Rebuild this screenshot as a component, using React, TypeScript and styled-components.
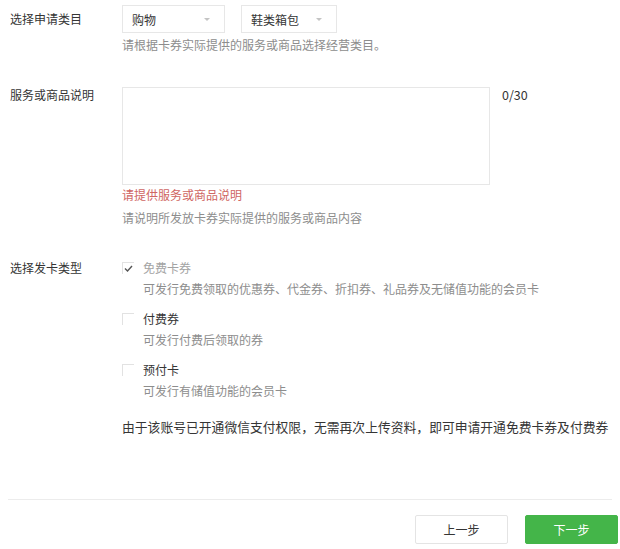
import React from "react";
import styled, { createGlobalStyle } from "styled-components";

const GlobalStyle = createGlobalStyle`
  body {
    margin: 0;
    background: #ffffff;
    font-family: "Noto Sans CJK SC", "Noto Sans", sans-serif;
    font-size: 12px;
    color: #353535;
  }
`;

const Page = styled.div`
  width: 620px;
  height: 549px;
  padding: 5px 0 0 10px;
  box-sizing: border-box;
  display: flex;
  flex-direction: column;
`;

const Row = styled.div<{ $mt?: number }>`
  display: flex;
  margin-top: ${(p) => p.$mt ?? 0}px;
`;

const Label = styled.div<{ $lh: number }>`
  width: 112px;
  flex-shrink: 0;
  line-height: ${(p) => p.$lh}px;
  color: #353535;
`;

const Field = styled.div`
  display: flex;
  flex-direction: column;
`;

const Selects = styled.div`
  display: flex;
  gap: 16px;
`;

const Select = styled.div<{ $w: number }>`
  width: ${(p) => p.$w}px;
  height: 28px;
  box-sizing: border-box;
  border: 1px solid #e7e7e7;
  padding: 0 14px 0 9px;
  display: flex;
  align-items: center;
  justify-content: space-between;
  color: #353535;
`;

const Caret = styled.span`
  width: 0;
  height: 0;
  border-left: 3px solid transparent;
  border-right: 3px solid transparent;
  border-top: 3px solid #c4c4c4;
`;

const Hint = styled.div<{ $mt?: number }>`
  color: #8d8d8d;
  line-height: 18px;
  margin-top: ${(p) => p.$mt ?? 0}px;
`;

const Error = styled.div`
  color: #cf6663;
  line-height: 18px;
  margin-top: 1px;
`;

const TextRow = styled.div`
  display: flex;
  align-items: flex-start;
`;

const TextArea = styled.div`
  width: 368px;
  height: 98px;
  box-sizing: border-box;
  border: 1px solid #e7e7e7;
`;

const Counter = styled.div`
  margin-left: 12px;
  line-height: 16px;
  color: #353535;
  font-size: 12.5px;
`;

const Options = styled.div`
  display: flex;
  flex-direction: column;
`;

const Option = styled.div<{ $mt?: number }>`
  display: flex;
  flex-direction: column;
  margin-top: ${(p) => p.$mt ?? 0}px;
`;

const OptionHead = styled.div`
  display: flex;
  align-items: center;
  height: 18px;
`;

const Box = styled.span`
  width: 12px;
  height: 12px;
  box-sizing: border-box;
  border-top: 1px solid #e2e2e2;
  border-left: 1px solid #e2e2e2;
  margin-right: 9px;
  display: flex;
  align-items: center;
  justify-content: center;
`;

const OptionTitle = styled.span<{ $disabled?: boolean }>`
  color: ${(p) => (p.$disabled ? "#a3a3a3" : "#353535")};
  line-height: 18px;
`;

const OptionDesc = styled.div`
  padding-left: 21px;
  color: #8d8d8d;
  line-height: 18px;
  margin-top: 3px;
`;

const Note = styled.div`
  margin-top: 18px;
  font-size: 12.8px;
  line-height: 18px;
  color: #353535;
`;

const Divider = styled.div`
  margin: 63px 8px 0 -2px;
  border-top: 1px solid #ececec;
`;

const Footer = styled.div`
  display: flex;
  justify-content: flex-end;
  gap: 17px;
  padding-right: 2px;
  margin-top: 15px;
`;

const Button = styled.button<{ $primary?: boolean }>`
  width: 93px;
  height: 29px;
  box-sizing: border-box;
  border-radius: 2px;
  font-family: inherit;
  font-size: 12px;
  cursor: pointer;
  border: 1px solid ${(p) => (p.$primary ? "#44b549" : "#e4e4e4")};
  background: ${(p) => (p.$primary ? "#44b549" : "#ffffff")};
  color: ${(p) => (p.$primary ? "#ffffff" : "#353535")};
`;

const Check = () => (
  <svg width="9" height="7" viewBox="0 0 9 7">
    <path d="M1 3.5 L3.5 6 L8 1" fill="none" stroke="#555" strokeWidth="1.4" />
  </svg>
);

const cardTypes = [
  {
    title: "免费卡券",
    desc: "可发行免费领取的优惠券、代金券、折扣券、礼品券及无储值功能的会员卡",
    checked: true,
    disabled: true,
  },
  { title: "付费券", desc: "可发行付费后领取的券", checked: false, disabled: false },
  { title: "预付卡", desc: "可发行有储值功能的会员卡", checked: false, disabled: false },
];

export default function App() {
  return (
    <>
      <GlobalStyle />
      <Page>
        <Row>
          <Label $lh={28}>选择申请类目</Label>
          <Field>
            <Selects>
              <Select $w={103}>
                <span>购物</span>
                <Caret />
              </Select>
              <Select $w={96}>
                <span>鞋类箱包</span>
                <Caret />
              </Select>
            </Selects>
            <Hint $mt={3}>请根据卡券实际提供的服务或商品选择经营类目。</Hint>
          </Field>
        </Row>

        <Row $mt={33}>
          <Label $lh={16}>服务或商品说明</Label>
          <Field>
            <TextRow>
              <TextArea />
              <Counter>0/30</Counter>
            </TextRow>
            <Error>请提供服务或商品说明</Error>
            <Hint $mt={5}>请说明所发放卡券实际提供的服务或商品内容</Hint>
          </Field>
        </Row>

        <Row $mt={32}>
          <Label $lh={18}>选择发卡类型</Label>
          <Options>
            {cardTypes.map((t, i) => (
              <Option key={t.title} $mt={i === 0 ? 0 : 12}>
                <OptionHead>
                  <Box>{t.checked && <Check />}</Box>
                  <OptionTitle $disabled={t.disabled}>{t.title}</OptionTitle>
                </OptionHead>
                <OptionDesc>{t.desc}</OptionDesc>
              </Option>
            ))}
            <Note>由于该账号已开通微信支付权限，无需再次上传资料，即可申请开通免费卡券及付费券</Note>
          </Options>
        </Row>

        <Divider />
        <Footer>
          <Button>上一步</Button>
          <Button $primary>下一步</Button>
        </Footer>
      </Page>
    </>
  );
}
